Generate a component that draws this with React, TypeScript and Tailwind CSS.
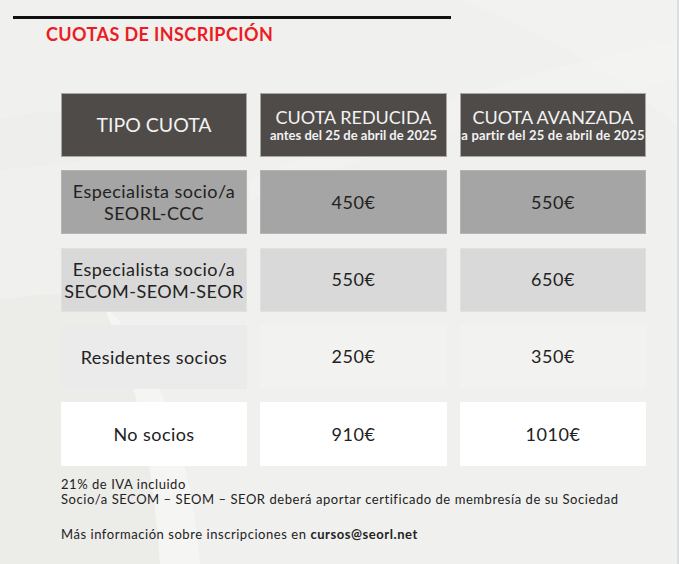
import React from "react";

const rows = [
  { label: ["Especialista socio/a", "SEORL-CCC"], a: "450€", b: "550€", c1: "bg-[#a5a5a5]", c2: "bg-[#a5a5a5]", border: "border-[#b4b4b4]" },
  { label: ["Especialista socio/a", "SECOM-SEOM-SEOR"], a: "550€", b: "650€", c1: "bg-[#d9d9d9]", c2: "bg-[#d9d9d9]", border: "border-[#e0e0e0]" },
  { label: ["Residentes socios"], a: "250€", b: "350€", c1: "bg-[#ecebec]", c2: "bg-[#f2f2f0]", border: "border-transparent" },
  { label: ["No socios"], a: "910€", b: "1010€", c1: "bg-white", c2: "bg-white", border: "border-transparent" },
];

export default function App() {
  return (
    <div
      className="relative w-[679px] h-[564px] overflow-hidden bg-[#f0f0ee] text-[#222]"
      style={{ fontFamily: "Lato, 'Open Sans', sans-serif" }}
    >
      <svg className="absolute inset-0" width="679" height="564" viewBox="0 0 679 564">
        <path d="M0 300 C60 290 90 295 100 300 C130 360 150 430 160 564 L0 564 Z" fill="#e9e9e7" opacity="0.7" />
        <path d="M100 300 C130 360 150 430 160 564 L200 564 C190 450 160 360 100 300 Z" fill="#f6f6f4" opacity="0.8" />
        <path d="M250 180 C380 120 520 70 679 40 L679 80 C520 110 380 150 250 200 Z" fill="#f4f4f2" opacity="0.5" />
        <path d="M460 0 C560 40 640 90 679 130 L679 0 Z" fill="#f3f3f1" opacity="0.5" />
        <path d="M0 120 C40 110 70 110 90 120 L90 160 L0 170 Z" fill="#ececea" opacity="0.5" />
      </svg>
      <div className="absolute right-0 top-0 h-full w-[2px] bg-[#dcdde1]" />

      <div className="relative pt-[16px]">
        <div className="ml-[13px] w-[438px] h-[3px] bg-[#111]" />
        <h1 className="ml-[46px] mt-[4px] text-[18px] leading-[22px] font-bold text-[#ec1c24] tracking-[0.4px]">
          CUOTAS DE INSCRIPCIÓN
        </h1>

        <div className="ml-[61px] mt-[48px] grid grid-cols-[186px_187px_186px] gap-x-[13px] gap-y-[13.25px]">
          <div className="h-[64px] bg-[#4f4b49] border border-[#a9a6a4] flex items-center justify-center text-[#f2f2f2] text-[19.5px]">
            TIPO CUOTA
          </div>
          <div className="h-[64px] bg-[#4f4b49] border border-[#a9a6a4] flex flex-col items-center justify-center text-[#f2f2f2]">
            <div className="text-[18px] leading-[20px]">CUOTA REDUCIDA</div>
            <div className="text-[13px] leading-[16px] font-bold">antes del 25 de abril de 2025</div>
          </div>
          <div className="h-[64px] bg-[#4f4b49] border border-[#a9a6a4] flex flex-col items-center justify-center text-[#f2f2f2]">
            <div className="text-[18px] leading-[20px]">CUOTA AVANZADA</div>
            <div className="text-[13px] leading-[16px] font-bold whitespace-nowrap tracking-[0.2px]">a partir del 25 de abril de 2025</div>
          </div>

          {rows.map((r, i) => (
            <React.Fragment key={i}>
              <div className={`h-[64px] ${r.c1} border ${r.border} flex flex-col items-center justify-center text-[18px] leading-[22px] tracking-[0.45px] text-[#222]`}>
                {r.label.map((l) => (
                  <div key={l} className="whitespace-nowrap">{l}</div>
                ))}
              </div>
              <div className={`h-[64px] ${r.c2} border ${r.border} flex items-center justify-center text-[18px] tracking-[0.6px] text-[#222]`}>
                {r.a}
              </div>
              <div className={`h-[64px] ${r.c2} border ${r.border} flex items-center justify-center text-[18px] tracking-[0.6px] text-[#222]`}>
                {r.b}
              </div>
            </React.Fragment>
          ))}
        </div>

        <div className="ml-[61px] mt-[11px] text-[13px] leading-[15px] tracking-[0.55px] text-[#222]">
          <div>21% de IVA incluido</div>
          <div>Socio/a SECOM – SEOM – SEOR deberá aportar certificado de membresía de su Sociedad</div>
          <div className="mt-[20px]">
            Más información sobre inscripciones en <span className="font-bold">cursos@seorl.net</span>
          </div>
        </div>
      </div>
    </div>
  );
}
